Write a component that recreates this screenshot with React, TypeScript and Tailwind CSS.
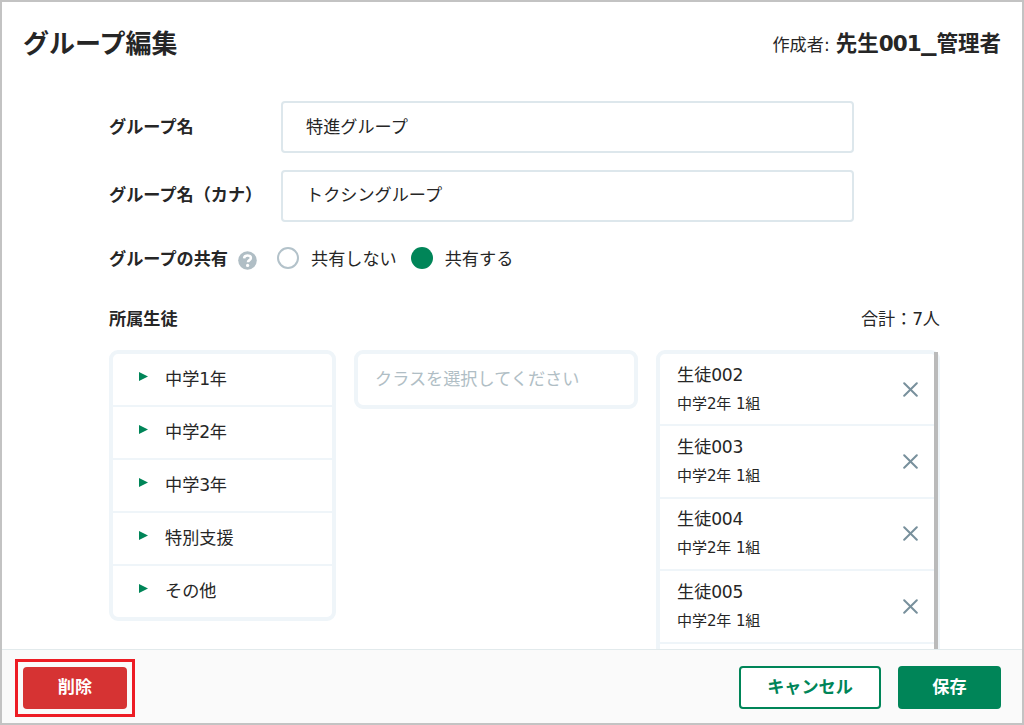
import React, { useState } from 'react';

const grades = ['中学1年', '中学2年', '中学3年', '特別支援', 'その他'];

const students = [
    { name: '生徒002', room: '中学2年 1組' },
    { name: '生徒003', room: '中学2年 1組' },
    { name: '生徒004', room: '中学2年 1組' },
    { name: '生徒005', room: '中学2年 1組' },
];

const Mixed: React.FC<{ text: string; className?: string }> = ({ text, className = 'tracking-[-0.02em]' }) => (
    <>
        {text.split(/([0-9]+)/).map((part, i) => (
            i % 2 ? <span key={i} className={className}>{part}</span> : part
        ))}
    </>
);

const Radio: React.FC<{ label: string; checked: boolean; onChange: () => void }> = ({ label, checked, onChange }) => (
    <label className="flex items-center">
        <input type="radio" name="share" className="sr-only" checked={checked} onChange={onChange} />
        <span className={checked
            ? 'mb-0.5 size-[22px] rounded-full bg-[#008558]'
            : 'mb-0.5 size-[22px] rounded-full border-2 border-[#b3c2ca] bg-white'}
        />
        <span className="ml-3">{label}</span>
    </label>
);

const CloseIcon = () => (
    <svg className="size-[15px]" viewBox="0 0 15 15" fill="none" stroke="#78909c" strokeWidth="2" strokeLinecap="round">
        <path d="M1.2 1.2 13.8 13.8M13.8 1.2 1.2 13.8" />
    </svg>
);

const HelpIcon = () => (
    <svg className="size-[19px]" viewBox="0 0 19 19" fill="none">
        <circle cx="9.5" cy="9.5" r="9.3" fill="#b0bec5" />
        <path d="M6.1 7.4C6.2 5.4 7.6 4.5 9.5 4.5c2 0 3.4.9 3.4 2.5 0 2.2-3 2-3 4.3" stroke="#fff" strokeWidth="2.5" />
        <circle cx="9.6" cy="14.4" r="1.6" fill="#fff" />
    </svg>
);

export default function App() {
    const [name, setName] = useState('特進グループ');
    const [kana, setKana] = useState('トクシングループ');
    const [shared, setShared] = useState(true);

    return (
        <div lang="ja" className="flex h-[725px] w-[1024px] flex-col overflow-hidden border-2 border-[#c3c3c3] bg-white font-['DejaVu_Sans','Noto_Sans_CJK_JP',sans-serif] text-[17.15px] leading-6 text-[#262626]">
            <header className="flex h-[82px] shrink-0 items-center justify-between px-[21px] pt-0.5">
                <h1 className="text-[26px] leading-8 font-bold">グループ編集</h1>
                <p className="flex items-baseline pb-2">
                    <span>作成者:</span>
                    <b className="ml-1.5 text-[21.5px]">
                        <Mixed text="先生001" className="tracking-[-0.04em]" />
                        <span className="align-[2px] text-[31px] leading-none">_</span>
                        管理者
                    </b>
                </p>
            </header>

            <main className="min-h-0 flex-1 overflow-hidden pt-[17px] pl-[107px]">
                <div className="flex h-[52px] items-center">
                    <label className="w-[172px] pb-px font-bold">グループ名</label>
                    <input
                        value={name}
                        onChange={(e) => setName(e.target.value)}
                        className="h-[52px] w-[573px] rounded-[4px] border-2 border-[#dde7ec] px-[23px] pb-1 outline-none"
                    />
                </div>
                <div className="mt-[17px] flex h-[52px] items-center">
                    <label className="w-[172px] pb-0.5 font-bold">グループ名（カナ）</label>
                    <input
                        value={kana}
                        onChange={(e) => setKana(e.target.value)}
                        className="h-[52px] w-[573px] rounded-[4px] border-2 border-[#dde7ec] px-[23px] pb-1.5 outline-none"
                    />
                </div>

                <div className="mt-[25px] flex h-6 items-center">
                    <span className="w-[120px] font-bold">グループの共有</span>
                    <span className="mt-0.5 mr-5 ml-[9px]"><HelpIcon /></span>
                    <Radio label="共有しない" checked={!shared} onChange={() => setShared(false)} />
                    <span className="w-[14px]" />
                    <Radio label="共有する" checked={shared} onChange={() => setShared(true)} />
                </div>

                <div className="mt-9 flex h-6 w-[831px] items-center justify-between">
                    <span className="font-bold">所属生徒</span>
                    <span><Mixed text="合計：7人" /></span>
                </div>

                <div className="mt-[19px] flex items-start">
                    <ul className="w-[227px] rounded-[9px] border-4 border-[#eff5f9]">
                        {grades.map((grade) => (
                            <li key={grade} className="flex h-[53px] items-center border-b-2 border-[#eff5f9] pb-0.5 pl-[26px] last:h-[51px] last:border-b-0">
                                <svg className="mb-[5px] h-[9px] w-[9px]" viewBox="0 0 9 9" fill="#008558">
                                    <path d="M0 0 9 4.5 0 9Z" />
                                </svg>
                                <span className="ml-[17px]"><Mixed text={grade} /></span>
                            </li>
                        ))}
                    </ul>
                    <div className="ml-[18px] h-[59px] w-[284px] rounded-[9px] border-4 border-[#eff5f9] px-[17px] py-[13px] text-[#b0bec5]">
                        クラスを選択してください
                    </div>
                    <div className="relative ml-[18px] h-[400px] w-[284px] rounded-[9px] border-4 border-[#eff5f9]">
                        <ul>
                            {students.map((student) => (
                                <li key={student.name} className="flex h-[72.4px] items-center justify-between border-b-2 border-[#eff5f9] pr-[18px] pl-[17px]">
                                    <div>
                                        <p className="leading-[29px]"><Mixed text={student.name} /></p>
                                        <p className="text-[15px] leading-[28px]"><Mixed text={student.room} /></p>
                                    </div>
                                    <button type="button" aria-label="削除"><CloseIcon /></button>
                                </li>
                            ))}
                        </ul>
                        <div className="absolute top-[-2px] right-[-2px] bottom-0 w-1 bg-[#bababa]" />
                    </div>
                </div>
            </main>

            <footer className="flex h-[74px] shrink-0 items-center border-t border-[#e2eaec] bg-[#fafafa] pt-0.5 pr-[21px] pl-[13px] font-bold">
                <div className="h-[58px] w-[120px] border-3 border-[#ed1c24] p-[5px]">
                    <button type="button" className="h-[42px] w-[104px] rounded-[4px] bg-[#d63333] pb-0.5 text-white">削除</button>
                </div>
                <button type="button" className="ml-auto h-[43px] w-[142px] rounded-[4px] border-2 border-[#008558] bg-white pb-0.5 text-[#008558]">キャンセル</button>
                <button type="button" className="ml-[17px] h-[43px] w-[103px] rounded-[4px] bg-[#008558] pb-0.5 text-white">保存</button>
            </footer>
        </div>
    );
}
